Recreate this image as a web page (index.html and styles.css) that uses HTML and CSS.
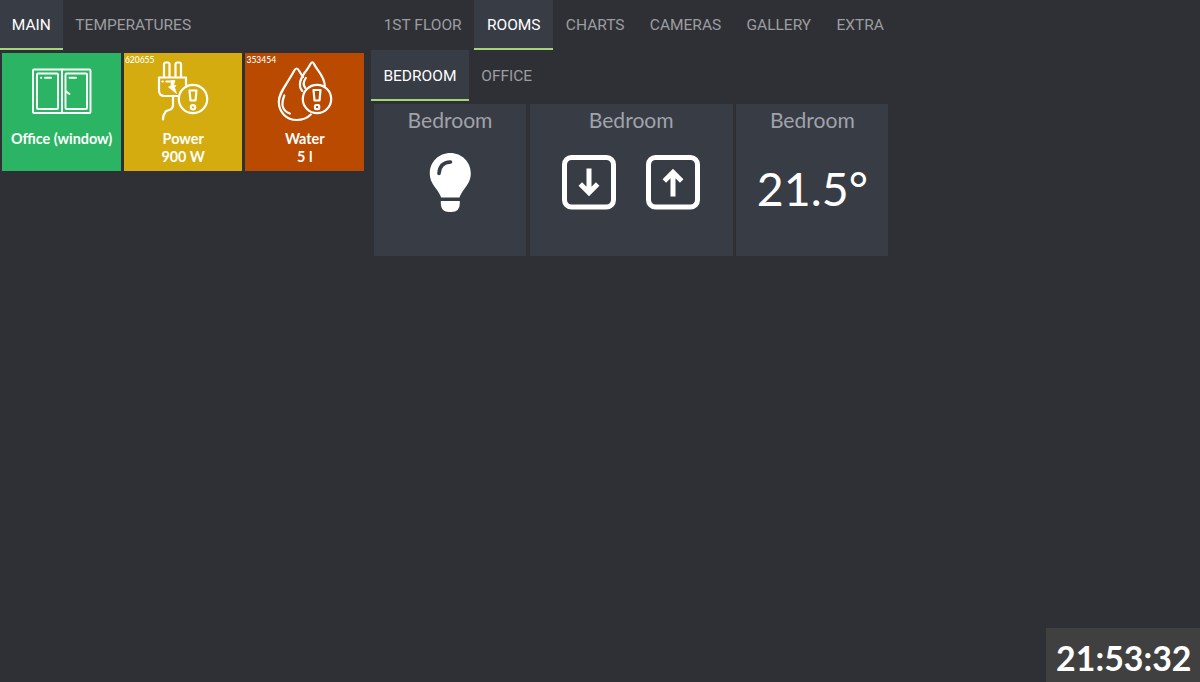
FILE: index.html
```html
<!DOCTYPE html>
<html lang="en">
<head>
<meta charset="utf-8">
<title>Home dashboard</title>
<link rel="stylesheet" href="styles.css">
</head>
<body>
<main class="dashboard">
  <section class="side">
    <nav class="tabs">
      <a class="tab active">MAIN</a>
      <a class="tab">TEMPERATURES</a>
    </nav>
    <div class="tiles">
      <article class="tile green">
        <svg class="tile-icon" viewBox="0 0 64 64" fill="none" stroke="#fff" stroke-width="1.9" stroke-linejoin="round" stroke-linecap="round">
          <rect x="3" y="10.500" width="57.500" height="43.500" rx="1"/>
          <path d="M32 10.500v43.500"/>
          <rect x="7" y="14.500" width="21" height="35.500" rx="1"/>
          <path d="M35.500 33V15.500q0-1 1-1h19.500q1 0 1 1v33.500q0 1-1 1H36.500q-1 0-1-1V32l4 3"/>
          <path d="M11 18.700h.3M15 18.700h6M39.500 18.700h6.500"/>
        </svg>
        <h2 class="tile-title">Office (window)</h2>
      </article>
      <article class="tile yellow">
        <span class="counter">620655</span>
        <svg class="tile-icon" viewBox="0 0 64 64" fill="none" stroke="#fff" stroke-width="2.2" stroke-linejoin="round" stroke-linecap="round">
          <path d="M13 18V5.500q0-2 2-2h1.500q2 0 2 2V18M24.500 18V5.500q0-2 2-2h1.500q2 0 2 2V18"/>
          <path d="M27 37H13.500q-5.500 0-5.500-5.500V18.500h27V26"/>
          <path d="M22 37v9q0 4-4 5t-4 3q-2 2-2 6.500"/>
          <circle cx="42" cy="40" r="14.200"/>
          <path d="M38.500 31.500h7l-1 10h-5z"/><circle cx="42" cy="48.300" r="2.200"/>
          <path d="M11.500 22.500h.3M15.500 22.500h3"/>
          <path d="M20 21.500h4l-1.500 5h2.500l-1.500 2 2 6-8-6.500 2.500-1.500z" fill="#fff" stroke-width=".7"/>
        </svg>
        <h2 class="tile-title">Power</h2>
        <p class="tile-value">900 W</p>
      </article>
      <article class="tile orange">
        <span class="counter">353454</span>
        <svg class="tile-icon" viewBox="0 0 64 64" fill="none" stroke="#fff" stroke-width="2.2" stroke-linejoin="round" stroke-linecap="round">
          <g transform="translate(.8 0)">
            <path d="M37 55.500C33 59.500 28 61 23 61 12.500 61 5 53 5 42.500 5 33.500 13 25.500 20.500 11.500q2.300-4 4.600 0l4 6.500"/>
            <path d="M28.500 32C24 27 26.500 20 31 13.500 34 10 35.500 7 37 4.500q1.500-2.500 3 0C43 11.500 51 17.500 51 27"/>
            <path d="M10.500 36.500Q5 50.500 16 54.500M32 19q-4 6-.5 10"/>
            <circle cx="43.200" cy="40" r="14.200"/>
            <path d="M39.700 31h7l-1 10.500h-5z"/><rect x="41.200" y="46" width="4.200" height="4.200" rx="1"/>
          </g>
        </svg>
        <h2 class="tile-title">Water</h2>
        <p class="tile-value">5 l</p>
      </article>
    </div>
  </section>
  <section class="content">
    <nav class="tabs">
      <a class="tab">1ST FLOOR</a>
      <a class="tab active">ROOMS</a>
      <a class="tab">CHARTS</a>
      <a class="tab">CAMERAS</a>
      <a class="tab">GALLERY</a>
      <a class="tab">EXTRA</a>
    </nav>
    <nav class="tabs subtabs">
      <a class="tab active">BEDROOM</a>
      <a class="tab">OFFICE</a>
    </nav>
    <div class="cards">
      <article class="card">
        <h2 class="card-title">Bedroom</h2>
        <div class="card-body">
          <svg width="42" height="60" viewBox="0 0 42 60">
            <path fill="#fff" d="M21.300 0C9.800 0 .8 9 .8 20.200c0 7 3 11 6.500 15.800 2.300 3 4 6 4.800 8.500h18.400c.8-2.500 2.500-5.500 4.800-8.500 3.500-4.800 6.500-8.800 6.500-15.800C41.800 9 32.800 0 21.300 0zM11.800 48h19v2.500q0 8.500-8.500 8.500h-2q-8.500 0-8.500-8.500z"/>
            <path d="M10 20.500Q10.500 9.500 21.500 9" fill="none" stroke="#383c45" stroke-width="3.600" stroke-linecap="round"/>
          </svg>
        </div>
      </article>
      <article class="card wide">
        <h2 class="card-title">Bedroom</h2>
        <div class="card-body">
          <svg width="54" height="55" viewBox="0 0 54 55" fill="none" stroke="#fff" stroke-width="5">
            <rect x="2.500" y="2.500" width="49" height="49.500" rx="7"/>
            <path d="M27 13.500v24M18.300 29l8.700 8.700 8.700-8.700"/>
          </svg>
          <svg width="54" height="55" viewBox="0 0 54 55" fill="none" stroke="#fff" stroke-width="5">
            <rect x="2.500" y="2.500" width="49" height="49.500" rx="7"/>
            <path d="M27 41.500v-24M18.300 26l8.700-8.700 8.700 8.700"/>
          </svg>
        </div>
      </article>
      <article class="card">
        <h2 class="card-title">Bedroom</h2>
        <div class="card-body reading">21.5°</div>
      </article>
    </div>
  </section>
</main>
<time class="clock">21:53:32</time>
</body>
</html>
```
FILE: styles.css
```css
* { box-sizing: border-box; }
body {
  margin: 0;
  height: 682px;
  overflow: hidden;
  background: #2f3035;
  color: #fff;
  font-family: Lato, sans-serif;
}
h2, p { margin: 0; }
.dashboard { display: grid; grid-template-columns: 371px 1fr; }
.tabs { display: flex; height: 50px; }
.tab {
  padding: 0 12.650px;
  line-height: 51px;
  font-family: Roboto, sans-serif;
  font-size: 15.500px;
  color: #9c9da0;
  white-space: nowrap;
}
.side .tab { padding: 0 12px 0 12.500px; }
.side .tab.active { padding-left: 11.800px; }
.tab.active {
  color: #fff;
  background: #383c45;
  box-shadow: inset 0 -2px #a5d479;
}
.subtabs { height: 50.500px; margin-bottom: .5px; }
.subtabs .tab { line-height: 52px; padding: 0 12.400px; }
.tiles { display: flex; gap: 3px; padding: 3px 0 0 2.300px; }
.tile {
  position: relative;
  width: 118.600px;
  height: 118px;
  padding-top: 6px;
  text-align: center;
  font-size: 14.400px;
  line-height: 18px;
  font-weight: 700;
}
.green { background: #2bb463; }
.yellow { background: #d4ac10; }
.orange { background: #ba4a00; }
.tile-icon { display: block; width: 64px; height: 64px; margin: 0 auto 6.500px; }
.tile-title { font-size: inherit; }
.counter {
  position: absolute;
  top: 1.500px;
  left: 1px;
  font-size: 8.500px;
  line-height: 11px;
  font-weight: 500;
}
.cards { display: flex; gap: 3.700px; padding: 3px 0 0 3px; }
.card { width: 152px; height: 152px; background: #383c45; }
.card.wide { width: 203px; }
.card-title {
  height: 32px;
  line-height: 32px;
  font-size: 21.100px;
  font-weight: 400;
  text-align: center;
  color: #a0a3aa;
}
.card-body {
  display: flex;
  justify-content: center;
  align-items: center;
  gap: 30px;
  height: 93px;
}
.wide .card-body { padding-right: .5px; }
.reading { height: 104px; font-size: 46.500px; }
.clock {
  position: absolute;
  right: 0;
  bottom: 0;
  width: 154px;
  height: 54px;
  padding-right: 8.500px;
  text-align: right;
  line-height: 60px;
  font-size: 33.900px;
  font-weight: 700;
  background: #404040;
}
```
